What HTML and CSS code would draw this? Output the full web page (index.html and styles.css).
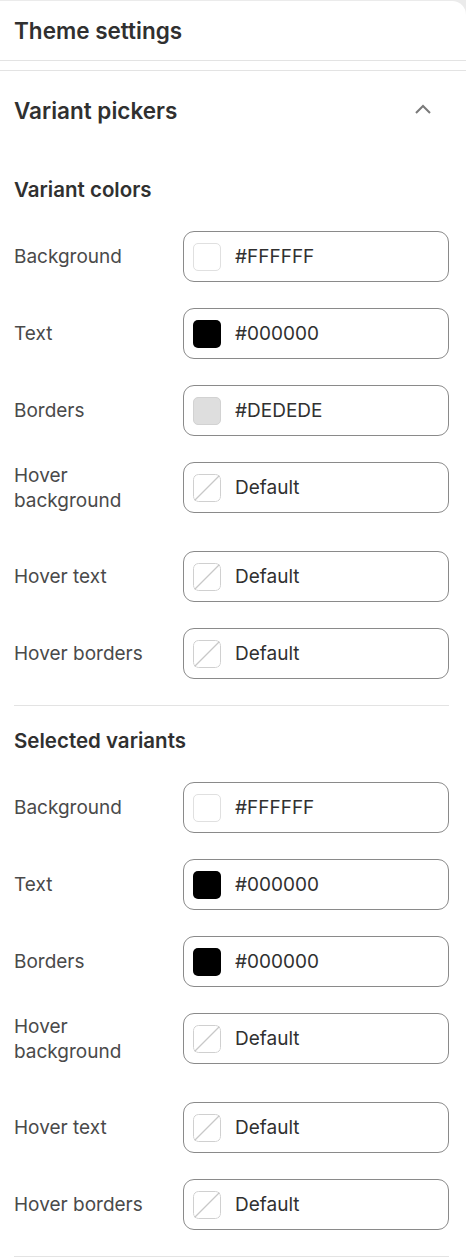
FILE: index.html
```html
<!doctype html>
<html>
<head>
<meta charset="utf-8">
<title>Theme settings</title>
<link rel="stylesheet" href="styles.css">
</head>
<body>
<div class="card">
	<div class="head">Theme settings</div>
	<div class="section">
		<div class="sec-head">
			<span>Variant pickers</span>
			<svg class="chev" width="18" height="12" viewBox="0 0 18 12"><path d="M2 10L9 3L16 10" fill="none" stroke="#7a7a7a" stroke-width="2"/></svg>
		</div>

		<h3 class="sub first">Variant colors</h3>
		<div class="rows">
			<div class="row"><span class="label">Background</span><div class="field"><i class="sw white"></i><span>#FFFFFF</span></div></div>
			<div class="row"><span class="label">Text</span><div class="field"><i class="sw black"></i><span>#000000</span></div></div>
			<div class="row"><span class="label">Borders</span><div class="field"><i class="sw grey"></i><span>#DEDEDE</span></div></div>
			<div class="row tall"><span class="label">Hover<br>background</span><div class="field"><svg class="sw none" viewBox="0 0 28 28"><rect x="0.5" y="0.5" width="27" height="27" rx="5" fill="#fff" stroke="#d0d0d0"/><path d="M1.5 26.5L26.5 1.5" stroke="#c8c8c8" stroke-width="1.2"/></svg><span>Default</span></div></div>
			<div class="row"><span class="label">Hover text</span><div class="field"><svg class="sw none" viewBox="0 0 28 28"><rect x="0.5" y="0.5" width="27" height="27" rx="5" fill="#fff" stroke="#d0d0d0"/><path d="M1.5 26.5L26.5 1.5" stroke="#c8c8c8" stroke-width="1.2"/></svg><span>Default</span></div></div>
			<div class="row"><span class="label">Hover borders</span><div class="field"><svg class="sw none" viewBox="0 0 28 28"><rect x="0.5" y="0.5" width="27" height="27" rx="5" fill="#fff" stroke="#d0d0d0"/><path d="M1.5 26.5L26.5 1.5" stroke="#c8c8c8" stroke-width="1.2"/></svg><span>Default</span></div></div>
		</div>

		<div class="sep"></div>

		<h3 class="sub">Selected variants</h3>
		<div class="rows">
			<div class="row"><span class="label">Background</span><div class="field"><i class="sw white"></i><span>#FFFFFF</span></div></div>
			<div class="row"><span class="label">Text</span><div class="field"><i class="sw black"></i><span>#000000</span></div></div>
			<div class="row"><span class="label">Borders</span><div class="field"><i class="sw black"></i><span>#000000</span></div></div>
			<div class="row tall"><span class="label">Hover<br>background</span><div class="field"><svg class="sw none" viewBox="0 0 28 28"><rect x="0.5" y="0.5" width="27" height="27" rx="5" fill="#fff" stroke="#d0d0d0"/><path d="M1.5 26.5L26.5 1.5" stroke="#c8c8c8" stroke-width="1.2"/></svg><span>Default</span></div></div>
			<div class="row"><span class="label">Hover text</span><div class="field"><svg class="sw none" viewBox="0 0 28 28"><rect x="0.5" y="0.5" width="27" height="27" rx="5" fill="#fff" stroke="#d0d0d0"/><path d="M1.5 26.5L26.5 1.5" stroke="#c8c8c8" stroke-width="1.2"/></svg><span>Default</span></div></div>
			<div class="row"><span class="label">Hover borders</span><div class="field"><svg class="sw none" viewBox="0 0 28 28"><rect x="0.5" y="0.5" width="27" height="27" rx="5" fill="#fff" stroke="#d0d0d0"/><path d="M1.5 26.5L26.5 1.5" stroke="#c8c8c8" stroke-width="1.2"/></svg><span>Default</span></div></div>
		</div>

		<div class="sep"></div>
	</div>
</div>
</body>
</html>
```

FILE: styles.css
```css
*{margin:0;padding:0;box-sizing:border-box}
body{background:#ebebeb;font-family:Inter,'Noto Sans',sans-serif;color:#303030}
.card{background:#fff;margin-top:1px;border-top-right-radius:14px;min-height:1300px}
.head{height:60px;display:flex;align-items:center;padding:0 14px;font-size:22.5px;font-weight:600;border-bottom:1px solid #e3e3e3}
.section{margin-top:9px;border-top:1px solid #e3e3e3;padding:0 17px 0 14px}
.sec-head{height:79px;display:flex;align-items:center;justify-content:space-between;font-size:22.5px;font-weight:600}
.chev{margin-right:17px;margin-top:-4px}
.sub{font-size:20.5px;font-weight:600;line-height:24px;margin:23px 0 29px}
.sub.first{margin:28px 0 29px}
.rows{display:flex;flex-direction:column;gap:26px}
.row{display:flex;align-items:center}
.row.tall{margin-bottom:12px}
.label{width:169px;font-size:19px;line-height:25px;color:#4a4a4a}
.field{flex:1;height:51px;border:1px solid #8a8a8a;border-radius:11px;display:flex;align-items:center;padding-left:9px;font-size:19px;color:#303030}
.sw{display:block;width:28px;height:28px;border-radius:5px;margin-right:14px;flex:none}
.white{background:#fff;border:1px solid #e0e0e0}
.black{background:#000}
.grey{background:#dedede;border:1px solid #d2d2d2}
.sep{height:1px;background:#e3e3e3;margin-top:26px}
```
